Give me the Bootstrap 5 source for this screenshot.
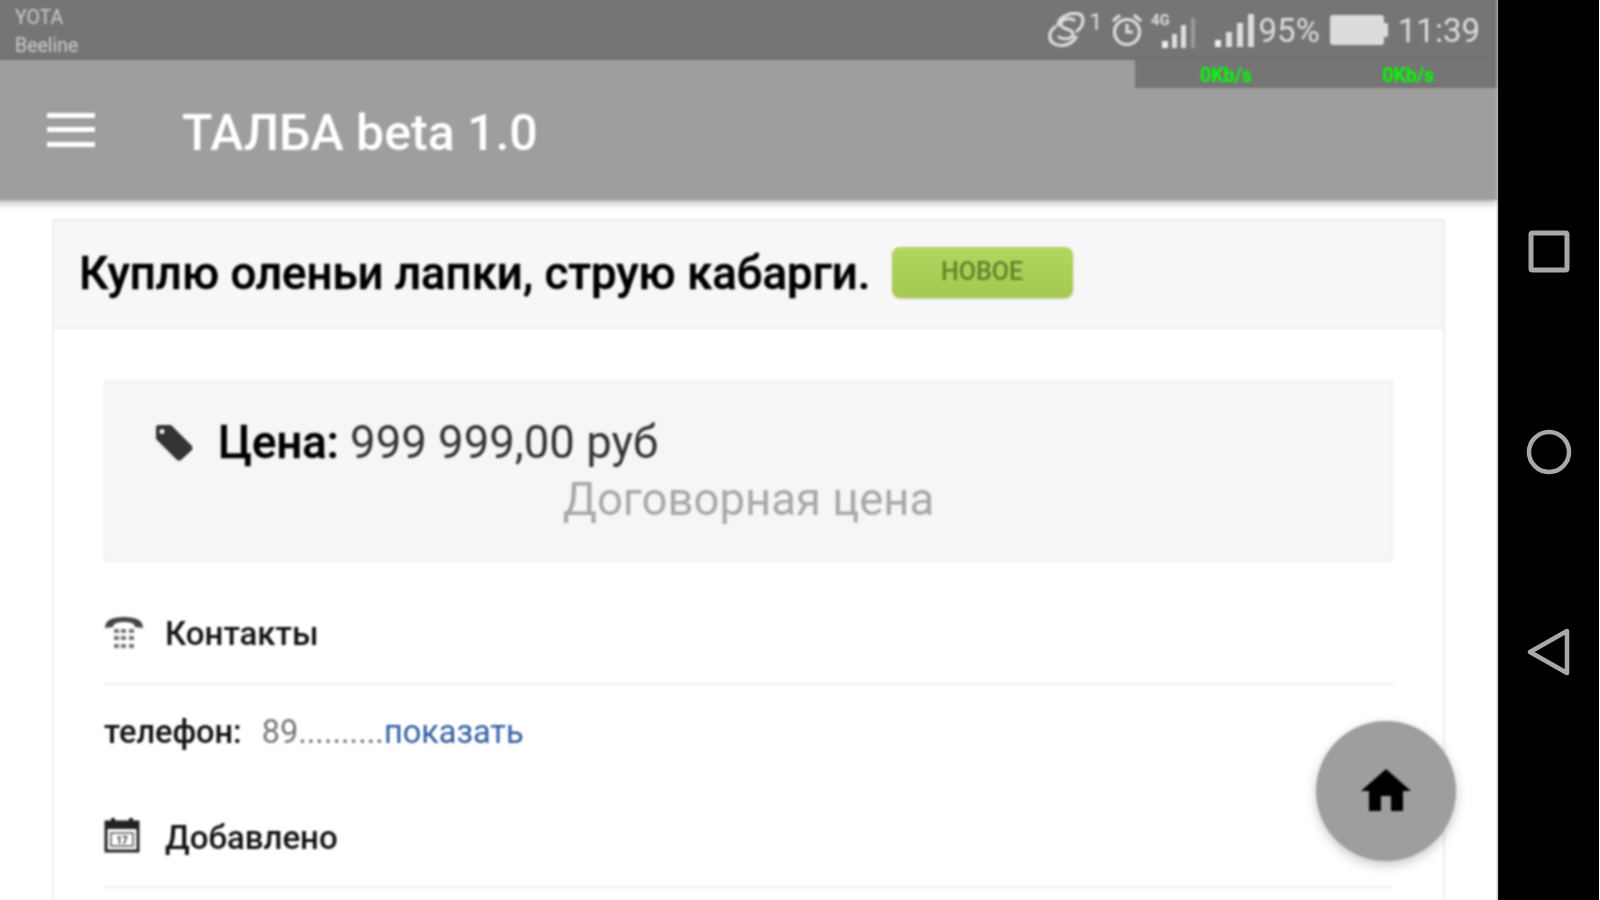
<!DOCTYPE html>
<html lang="ru">
  <head>
    <meta charset="UTF-8" />
    <title>ТАЛБА beta 1.0</title>
    <link href="https://cdn.jsdelivr.net/npm/bootstrap@5.3.2/dist/css/bootstrap.min.css" rel="stylesheet" />
    <style>
      html, body { height: 900px; overflow: hidden; }
      body { background: #fff; font-family: Roboto, "Liberation Sans", sans-serif; color: #111; }
      .shot { height: 900px; }
      /* 4px bleed past the top and left so the blur doesn't lighten the window edge */
      .phone { width: 1501px; height: 904px; margin: -4px 0 0 -4px; padding: 4px 0 0 4px; background: #fff; overflow: hidden; filter: blur(0.8px); flex: none; }
      .sys-bar { height: 64px; margin: -4px 0 0 -4px; background: #757575; color: #ddd; padding: 4px 17px 0 19px; }
      .carrier { font-size: 19.5px; line-height: 28px; color: #ccc; padding-top: 3px; }
      .sys-icons { height: 60px; }
      .sys-text { font-size: 33px; line-height: 1; color: #ddd; }
      .sys-count { font-size: 24px; line-height: 1; color: #ddd; align-self: flex-start; margin: 10px 8px 0 4px; }
      .sys-pct { margin-left: 4px; }
      .sys-batt { margin-left: 10px; }
      .sys-time { margin-left: 10px; }
      .app-bar { height: 140px; margin-left: -4px; background: #9e9e9e; padding: 0 0 0 51px; box-shadow: 0 3px 7px rgba(0, 0, 0, .3); z-index: 2; }
      .app-title { font-size: 50px; font-weight: 500; color: #fff; margin-left: 87px; line-height: 1; padding-top: 6px; }
      .speed-bar { top: 64px; right: 0; width: 362px; height: 28px; background: #757575; color: #0f0; font-size: 19.5px; font-weight: 700; padding: 3px 63px 0 65px; z-index: 3; }
      .ad-card { margin: 19px 52px 0; border: 2px solid #eee; border-radius: 0; }
      .ad-head { height: 108px; background: #f7f7f7; border-bottom: 2px solid #eee; border-radius: 0 !important; padding: 0 0 0 25px; }
      .ad-title { font-size: 45.6px; font-weight: 500; color: #000; margin: 0; line-height: 1; -webkit-text-stroke: .5px #000; }
      .new-tag { width: 181px; height: 51px; margin: 0 0 4px 21px; border-radius: 8px; background: linear-gradient(#b2d660, #a3c94f); color: #64802c; font-size: 25px; font-weight: 500; box-shadow: 0 1px 2px rgba(0, 0, 0, .15); }
      .ad-body { padding: 51px 50px 40px; }
      .price-box { height: 182px; background: #f6f6f6; border: 1px solid #eee; padding: 33px 51px 0; font-size: 45.5px; line-height: 57px; color: #333; }
      .price-row { gap: 25px; }
      .price-label { font-weight: 500; color: #000; -webkit-text-stroke: .5px #000; }
      .price-note { color: #a8a8a8; text-align: center; }
      .info-head { font-size: 33px; font-weight: 500; color: #111; border-bottom: 2px solid #eee; gap: 21px; }
      .info-head svg { flex: none; }
      .info-contacts { height: 123px; padding-top: 23px; }
      .info-added { height: 107px; padding-top: 8px; }
      .info-added svg { margin-top: -6px; }
      .info-phone { height: 96px; font-size: 32.5px; padding-bottom: 2px; }
      .info-phone b { font-weight: 500; margin-right: 20px; color: #111; }
      .info-phone span { color: #777; }
      .info-phone a { color: #2f5b9e; text-decoration: none; }
      .fab { left: 1320px; top: 725px; width: 140px; height: 140px; background: #9e9e9e; box-shadow: 0 4px 12px rgba(0, 0, 0, .22); z-index: 3; }
      .nav-keys { width: 103px; height: 900px; background: #000; padding-top: 230px; border-left: 2px solid #bbb; margin-left: -1px; flex: none; }
      .nav-keys svg { display: block; }
      .key-home { margin-top: 155px; }
      .key-back { margin-top: 153px; }
    </style>
  </head>
  <body>
    <div class="shot d-flex">
      <div class="phone position-relative d-flex flex-column">
        <div class="sys-bar d-flex justify-content-between align-items-center flex-shrink-0">
          <div class="carrier">YOTA<br />Beeline</div>
          <div class="sys-icons d-flex align-items-center">
            <svg width="38" height="36" viewBox="0 0 38 36" fill="none" stroke="#ddd" stroke-width="3.2" stroke-linecap="round">
              <path d="M11 13C12 4 24 0 32 2C38 4 37 14 30 19" />
              <path d="M27 8C20 5 13 8 14 13C15 18 26 16 26 22C26 27 17 28 12 25" />
              <path d="M8 15C2 19 1 27 6 31C13 36 25 33 29 25" />
            </svg>
            <div class="sys-count">1</div>
            <svg width="32" height="36" viewBox="0 0 32 36" fill="none" stroke="#ddd" stroke-width="3.2">
              <circle cx="16" cy="20" r="12.5" />
              <path d="M16 12v8h6M2 9l7-6M30 9l-7-6" />
            </svg>
            <svg class="ms-2" width="48" height="38" viewBox="0 0 48 38">
              <text x="0" y="14" font-size="15" font-weight="700" fill="#ddd" font-family="Roboto">4G</text>
              <rect x="11" y="30" width="6" height="7" fill="#eee" />
              <rect x="21" y="23" width="5" height="14" fill="#ddd" />
              <rect x="30" y="14" width="5" height="23" fill="#ddd" />
              <rect x="40" y="7" width="4" height="30" fill="#999" />
            </svg>
            <svg class="ms-3" width="40" height="36" viewBox="0 0 40 36" fill="#ddd">
              <rect x="0" y="28" width="6" height="7" fill="#eee" />
              <rect x="11" y="20" width="6" height="15" />
              <rect x="22" y="11" width="6" height="24" />
              <rect x="33" y="2" width="6" height="33" />
            </svg>
            <div class="sys-text sys-pct">95%</div>
            <svg class="sys-batt" width="58" height="30" viewBox="0 0 58 30">
              <rect x="0" y="0" width="54" height="30" rx="3" fill="#dcdcdc" />
              <rect x="54" y="8" width="4" height="14" rx="1" fill="#ddd" />
            </svg>
            <div class="sys-text sys-time">11:39</div>
          </div>
        </div>
        <div class="app-bar d-flex align-items-center position-relative flex-shrink-0">
          <svg width="48" height="34" viewBox="0 0 48 34" fill="#fff">
            <rect width="48" height="5" rx="1" />
            <rect y="14" width="48" height="5" rx="1" />
            <rect y="29" width="48" height="5" rx="1" />
          </svg>
          <div class="app-title">ТАЛБА beta 1.0</div>
        </div>
        <div class="speed-bar position-absolute d-flex justify-content-between align-items-center">
          <span>0Kb/s</span><span>0Kb/s</span>
        </div>
        <div class="card ad-card flex-shrink-0">
          <div class="card-header ad-head d-flex align-items-center">
            <h1 class="ad-title">Куплю оленьи лапки, струю кабарги.</h1>
            <div class="new-tag d-flex align-items-center justify-content-center">НОВОЕ</div>
          </div>
          <div class="card-body ad-body">
            <div class="price-box">
              <div class="price-row d-flex align-items-center">
                <svg width="37" height="36" viewBox="0 0 37 36">
                  <path fill="#333" fill-rule="evenodd" d="M0 3Q0 0 3 0H15L36 21Q37 23 36 25L25 35Q23 36 21 35L0 14ZM6 4a2.5 2.5 0 1 0 .01 0Z" />
                </svg>
                <div><span class="price-label">Цена:</span> 999 999,00 руб</div>
              </div>
              <div class="price-note">Договорная цена</div>
            </div>
            <div class="info-head info-contacts d-flex align-items-center">
              <svg width="40" height="36" viewBox="0 0 40 36" fill="#444">
                <path d="M1 12Q1 1 20 1T39 12L31 11Q31 6 20 6T9 11Z" />
                <g fill="#777">
                  <rect x="10" y="13" width="5" height="4" /><rect x="17" y="13" width="5" height="4" /><rect x="25" y="13" width="5" height="4" />
                  <rect x="10" y="20" width="5" height="4" /><rect x="17" y="20" width="5" height="4" /><rect x="25" y="20" width="5" height="4" />
                  <rect x="10" y="28" width="5" height="4" /><rect x="17" y="28" width="5" height="4" /><rect x="25" y="28" width="5" height="4" />
                </g>
              </svg>
              Контакты
            </div>
            <div class="info-phone d-flex align-items-center">
              <b>телефон:</b><span>89..........</span><a href="#">показать</a>
            </div>
            <div class="info-head info-added d-flex align-items-center">
              <svg width="40" height="36" viewBox="0 0 40 36">
                <path fill="none" stroke="#222" stroke-width="3" d="M2 5H34V34H2Z" />
                <rect x="2" y="5" width="32" height="7" fill="#222" />
                <rect x="7" y="1" width="4" height="7" fill="#222" />
                <rect x="25" y="1" width="4" height="7" fill="#222" />
                <rect x="7" y="16" width="22" height="13" fill="none" stroke="#555" stroke-width="1.5" />
                <text x="18" y="27" text-anchor="middle" font-size="10" font-weight="700" fill="#333" font-family="Roboto">17</text>
              </svg>
              Добавлено
            </div>
          </div>
        </div>
        <div class="fab position-absolute rounded-circle d-flex align-items-center justify-content-center">
          <svg width="50" height="44" viewBox="0 0 50 44" fill="#000">
            <path d="M25 0L50 22H42V42H30V27H20V42H8V22H0Z" />
          </svg>
        </div>
      </div>
      <div class="nav-keys d-flex flex-column align-items-center">
        <svg width="42" height="44" viewBox="0 0 42 44" fill="none" stroke="#a8a8a8" stroke-width="5">
          <rect x="3" y="3" width="36" height="37" rx="1.5" />
        </svg>
        <svg class="key-home" width="46" height="46" viewBox="0 0 46 46" fill="none" stroke="#a8a8a8" stroke-width="4.5">
          <circle cx="23" cy="23" r="20" />
        </svg>
        <svg class="key-back" width="44" height="48" viewBox="0 0 44 48" fill="none" stroke="#a8a8a8" stroke-width="4.5" stroke-linejoin="round">
          <path d="M3 24L40 3V45Z" />
        </svg>
      </div>
    </div>
    <script src="https://cdn.jsdelivr.net/npm/bootstrap@5.3.2/dist/js/bootstrap.bundle.min.js"></script>
  </body>
</html>
